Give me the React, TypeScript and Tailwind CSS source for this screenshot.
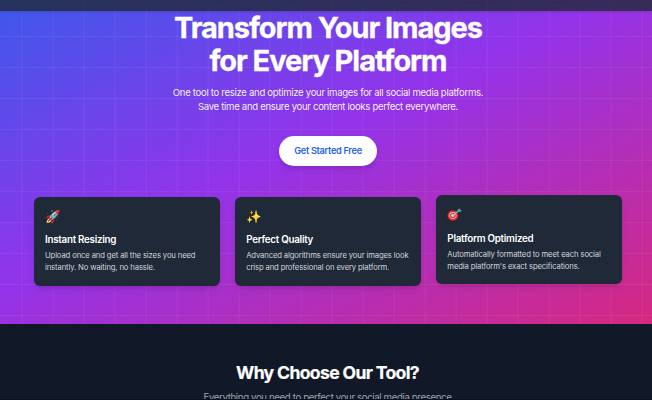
import type { ReactNode } from 'react';

function Target() {
  return (
    <svg width="15.5" height="15.5" viewBox="0 0 16 16" className="mt-px block" aria-hidden="true">
      <ellipse cx="6.2" cy="9" rx="5.8" ry="5.6" fill="#8f1622" />
      <ellipse cx="6" cy="8.8" rx="5.3" ry="5.2" fill="#dc2a38" />
      <ellipse cx="6" cy="8.8" rx="3.8" ry="3.6" fill="#efb9b8" />
      <ellipse cx="6" cy="8.8" rx="2.9" ry="2.7" fill="#dc2a38" />
      <ellipse cx="6" cy="8.8" rx="1.6" ry="1.5" fill="#f1e4e2" />
      <path d="M6 8.8L11.5 4.5" stroke="#7fc4bd" strokeWidth="1.3" />
      <path d="M10 5.2L11 2.6L13.6 1.2L13.5 3L15.6 3.6L13.4 5.4Z" fill="#45a39c" />
    </svg>
  );
}

const features: { icon: ReactNode; title: string; lines: string[]; raised: boolean }[] = [
  { icon: '🚀', title: 'Instant Resizing', lines: ['Upload once and get all the sizes you need', 'instantly. No waiting, no hassle.'], raised: false },
  { icon: '✨', title: 'Perfect Quality', lines: ['Advanced algorithms ensure your images look', 'crisp and professional on every platform.'], raised: false },
  { icon: <Target />, title: 'Platform Optimized', lines: ['Automatically formatted to meet each social', "media platform's exact specifications."], raised: true },
];

export default function App() {
  return (
    <div className="flex h-[400px] w-[652px] flex-col overflow-hidden border-b border-[#0b0f19] bg-[#111827] font-['Inter','Liberation_Sans',sans-serif] text-white">
      <div className="relative h-[324px] shrink-0 overflow-hidden">
        <div className="absolute -top-[41px] -right-[40px] -bottom-[8px] -left-[85px] bg-[linear-gradient(to_bottom_right,#2563eb,#9333ea_50%,#db2777)]" />
        <svg className="absolute inset-0 h-full w-full" aria-hidden="true">
          <defs>
            <pattern id="grid" x="21.6" y="5" width="31" height="31" patternUnits="userSpaceOnUse">
              <path d="M0.5 0V31M0 0.5H31" stroke="white" strokeOpacity="0.06" fill="none" />
            </pattern>
          </defs>
          <rect width="100%" height="100%" fill="url(#grid)" />
        </svg>
        <header className="relative h-[11px] bg-[#1f2937]/80 shadow-sm" />
        <div className="relative flex flex-col items-center pl-[4px]">
          <h1 className="whitespace-nowrap text-center text-[29px] leading-[33px] font-bold tracking-[-1.06px] [-webkit-text-stroke:0.3px_white]">
            Transform Your Images
            <br />
            for Every Platform
          </h1>
          <p className="mt-[9px] whitespace-nowrap text-center text-[9.6px] leading-[13.5px] tracking-[-0.32px] text-white/95">
            One tool to resize and optimize your images for all social media platforms.
            <br />
            Save time and ensure your content looks perfect everywhere.
          </p>
          <button className="mt-[23px] h-[29.5px] w-[98px] rounded-full bg-white text-[9.2px] font-semibold tracking-[-0.3px] text-[#2563eb] shadow-md">
            Get Started Free
          </button>
          <div className="mt-[31px] grid w-[588px] grid-cols-3 gap-[15.5px]">
            {features.map((f) => (
              <div key={f.title} className={`h-[89px] rounded-[6px] bg-[#1f2937] px-[11px] pt-[11.5px] shadow-md ${f.raised ? '-translate-y-[2px]' : ''}`}>
                <div className="h-[20px] text-[12.5px] leading-[18px]">{f.icon}</div>
                <h3 className="mt-[4px] whitespace-nowrap text-[9.8px] leading-[15px] font-semibold tracking-[-0.26px]">{f.title}</h3>
                <p className="mt-[3px] whitespace-nowrap text-[7.7px] leading-[11.5px] tracking-[-0.14px] text-[#d1d5db]">
                  {f.lines[0]}
                  <br />
                  {f.lines[1]}
                </p>
              </div>
            ))}
          </div>
        </div>
      </div>
      <section className="flex flex-col items-center pt-[38px] pl-[3px]">
        <h2 className="whitespace-nowrap text-[17.6px] leading-[22px] font-bold tracking-[-0.66px] [-webkit-text-stroke:0.2px_white]">Why Choose Our Tool?</h2>
        <p className="mt-[6px] whitespace-nowrap text-[9.7px] leading-[16px] tracking-[-0.39px] text-[#9ca3af]">Everything you need to perfect your social media presence</p>
      </section>
    </div>
  );
}
